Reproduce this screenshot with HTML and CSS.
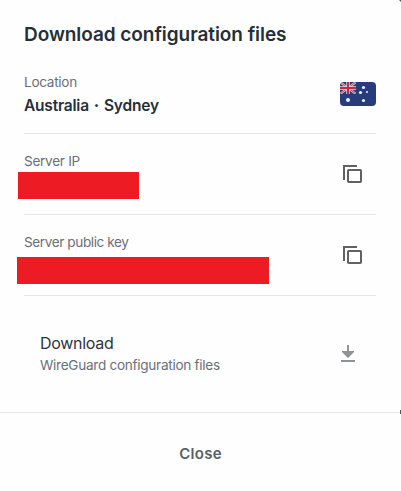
FILE: index.html
```html
<!DOCTYPE html>
<html lang="en">
<head>
<meta charset="utf-8">
<title>Download configuration files</title>
<link rel="stylesheet" href="styles.css">
</head>
<body>
<main class="dialog">
  <h1 class="title">Download configuration files</h1>
  <section class="row location">
    <div>
      <div class="label label-location">Location</div>
      <div class="value">Australia <span class="dot">·</span> Sydney</div>
    </div>
    <svg class="flag" viewBox="0 0 36 24" width="36" height="24">
      <defs>
        <clipPath id="round"><rect width="36" height="24" rx="4"/></clipPath>
        <clipPath id="canton"><rect width="16" height="12"/></clipPath>
      </defs>
      <g clip-path="url(#round)">
        <rect width="36" height="24" fill="#273b7d"/>
        <g clip-path="url(#canton)">
          <path d="M0 0L16 12M16 0L0 12" stroke="#e9c3d0" stroke-width="2.2"/>
          <path d="M0 0L16 12M16 0L0 12" stroke="#c43c58" stroke-width="0.9"/>
          <path d="M8 0V12M0 6H16" stroke="#f3d5df" stroke-width="3.4"/>
          <path d="M8 0V12M0 6H16" stroke="#c22a47" stroke-width="2"/>
        </g>
        <g fill="#eef3ff">
          <circle cx="8" cy="18" r="2"/>
          <circle cx="23.5" cy="5.5" r="1.6"/>
          <circle cx="20.5" cy="10.5" r="1.6"/>
          <circle cx="27" cy="10" r="1"/>
          <circle cx="23.5" cy="18.5" r="1.6"/>
        </g>
      </g>
    </svg>
  </section>
  <section class="row ip">
    <div>
      <div class="label label-ip">Server IP</div>
      <div class="redacted redacted-ip"></div>
    </div>
    <svg class="copy" viewBox="0 0 20 20" width="20" height="20" fill="none" stroke="#5f6166" stroke-width="2">
      <path d="M2 15V1H15"/><rect x="6" y="5" width="13" height="12" rx=".7"/>
    </svg>
  </section>
  <section class="row key">
    <div>
      <div class="label label-key">Server public key</div>
      <div class="redacted redacted-key"></div>
    </div>
    <svg class="copy" viewBox="0 0 20 20" width="20" height="20" fill="none" stroke="#5f6166" stroke-width="2">
      <path d="M2 15V1H15"/><rect x="6" y="5" width="13" height="12" rx=".7"/>
    </svg>
  </section>
  <section class="download">
    <div>
      <div class="download-name">Download</div>
      <div class="label label-files">WireGuard configuration files</div>
    </div>
    <svg class="arrow" viewBox="0 0 14 17" width="14" height="17" fill="#909396">
      <path d="M6 0H8V6H13V7L7 13L1 7V6H6ZM0 15H14V17H0Z"/>
    </svg>
  </section>
  <footer class="footer"><button class="close">Close</button></footer>
  <span class="edge edge-top"></span>
  <span class="edge edge-footer"></span>
</main>
</body>
</html>
```
FILE: styles.css
```css
* { box-sizing: border-box; }
body { margin: 0; background: #fefefe; font-family: Inter, sans-serif; }
.dialog { position: relative; width: 401px; height: 491px; overflow: hidden; display: flex; flex-direction: column; white-space: nowrap; }
.title { margin: 23px 24px 0; height: 46px; font-size: 19px; line-height: 24px; font-weight: 600; color: #262e38; letter-spacing: -0.06px; }
.row { display: flex; justify-content: space-between; margin: 0 25px 0 24px; border-bottom: 1px solid #e7e7e8; }
.location { height: 65px; padding-top: 4px; }
.ip, .key { height: 81px; padding-top: 18px; }
.label { height: 20px; font-size: 13.6px; line-height: 18px; color: #6b7076; letter-spacing: -0.29px; }
.label-key { letter-spacing: -0.41px; }
.value { margin-top: 2px; font-size: 15.5px; line-height: 22px; font-weight: 600; color: #262e38; letter-spacing: -0.2px; }
.dot { font-weight: 800; margin: 0 1.2px; }
.flag { margin-top: 9px; }
.copy { margin: 13px 14px 0 0; }
.redacted { height: 27px; background: #ed1c24; }
.redacted-ip { width: 121px; margin: 0 0 0 -6px; }
.redacted-key { width: 252px; margin: 4px 0 0 -7px; }
.download { display: flex; justify-content: space-between; height: 116px; margin: 0 46px 0 40px; padding-top: 35px; }
.download-name { font-size: 16px; line-height: 24px; color: #2e343c; letter-spacing: -0.28px; }
.label-files { margin-top: 1px; }
.arrow { margin-top: 14px; }
.footer { height: 79px; border-top: 1px solid #e7e7e8; display: flex; justify-content: center; align-items: center; padding-top: 4px; }
.close { border: 0; padding: 0; background: none; font: 600 15px/24px Inter, sans-serif; color: #5a5e65; letter-spacing: 0.3px; }
.edge { position: absolute; background: #55575d; }
.edge-top { top: 0; right: 0; width: 2px; height: 2px; clip-path: polygon(0 0, 100% 0, 100% 100%); }
.edge-footer { top: 410px; right: 0; width: 1px; height: 4px; }
```
